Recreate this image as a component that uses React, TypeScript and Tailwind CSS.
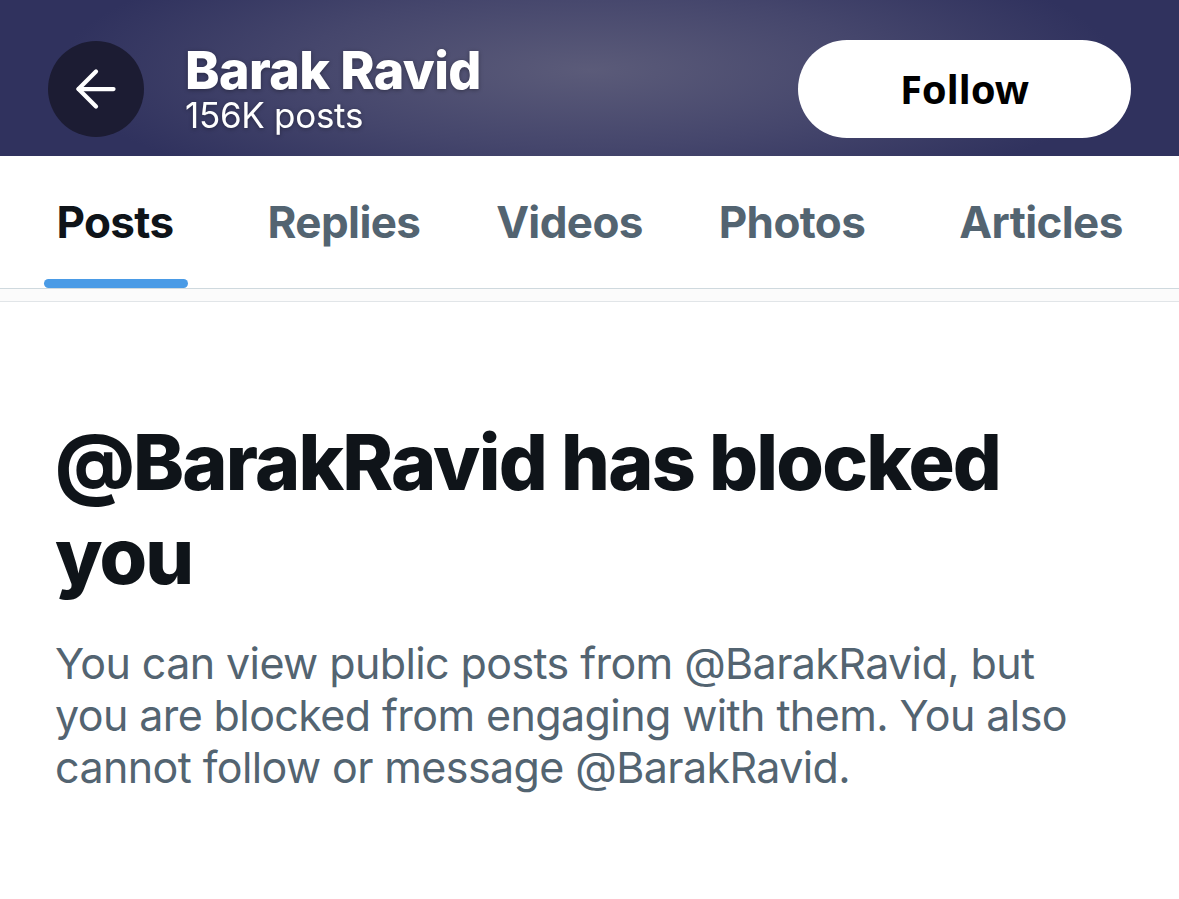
import { ArrowLeft } from "lucide-react";

const tabs = [
  { label: "Posts", width: "w-[230px]", active: true },
  { label: "Replies", width: "w-[228px]", active: false },
  { label: "Videos", width: "w-[223px]", active: false },
  { label: "Photos", width: "w-[222px]", active: false },
  { label: "Articles", width: "w-[276px]", active: false },
];

export default function App() {
  return (
    <div className="w-[1179px] h-[899px] bg-white overflow-hidden font-['Inter',sans-serif]">
      {/* Header */}
      <header className="h-[156px] flex items-center pt-[22px] pl-[48px] pr-[48px] bg-[radial-gradient(ellipse_45%_90%_at_50%_45%,#5b5b79_0%,#45466c_55%,#30325e_100%)]">
        <button className="w-[96px] h-[96px] rounded-full bg-[#1c1c33] flex items-center justify-center shrink-0">
          <ArrowLeft className="w-[60px] h-[60px] text-white" strokeWidth={1.7} />
        </button>
        <div className="ml-[41px] flex flex-col text-white drop-shadow-[0_1px_2px_rgba(0,0,0,0.35)]">
          <span className="text-[52px] leading-[52px] font-extrabold tracking-[-0.6px]">Barak Ravid</span>
          <span className="text-[35px] leading-[36px] font-normal tracking-[-0.3px]">156K posts</span>
        </div>
        <button className="ml-auto w-[333px] h-[98px] rounded-full bg-white flex items-center justify-center">
          <span className="text-[40px] font-bold text-black font-['Noto_Sans',sans-serif]">Follow</span>
        </button>
      </header>

      {/* Tabs */}
      <nav className="h-[133px] flex border-b border-[#cfd9de]">
        {tabs.map((tab) => (
          <div key={tab.label} className={`${tab.width} relative flex items-center justify-center`}>
            <span
              className={`text-[44px] font-bold tracking-[-0.6px] ${
                tab.active ? "text-[#0f1419]" : "text-[#536471]"
              }`}
            >
              {tab.label}
            </span>
            {tab.active && (
              <div className="absolute bottom-0 left-[44px] w-[144px] h-[9px] rounded-full bg-[#4a9be6]" />
            )}
          </div>
        ))}
      </nav>
      <div className="h-[13px] bg-[#fbfbfb] border-b border-[#e1e5e8]" />

      {/* Blocked message */}
      <section className="px-[55px] pt-[113px]">
        <h1 className="text-[77px] leading-[94px] font-extrabold text-[#0f1419] tracking-[-1.8px]">
          @BarakRavid has blocked
          <br />
          you
        </h1>
        <p className="mt-[34px] text-[43px] leading-[52px] text-[#536471] tracking-[-0.6px]">
          You can view public posts from @BarakRavid, but
          <br />
          you are blocked from engaging with them. You also
          <br />
          cannot follow or message @BarakRavid.
        </p>
      </section>
    </div>
  );
}
